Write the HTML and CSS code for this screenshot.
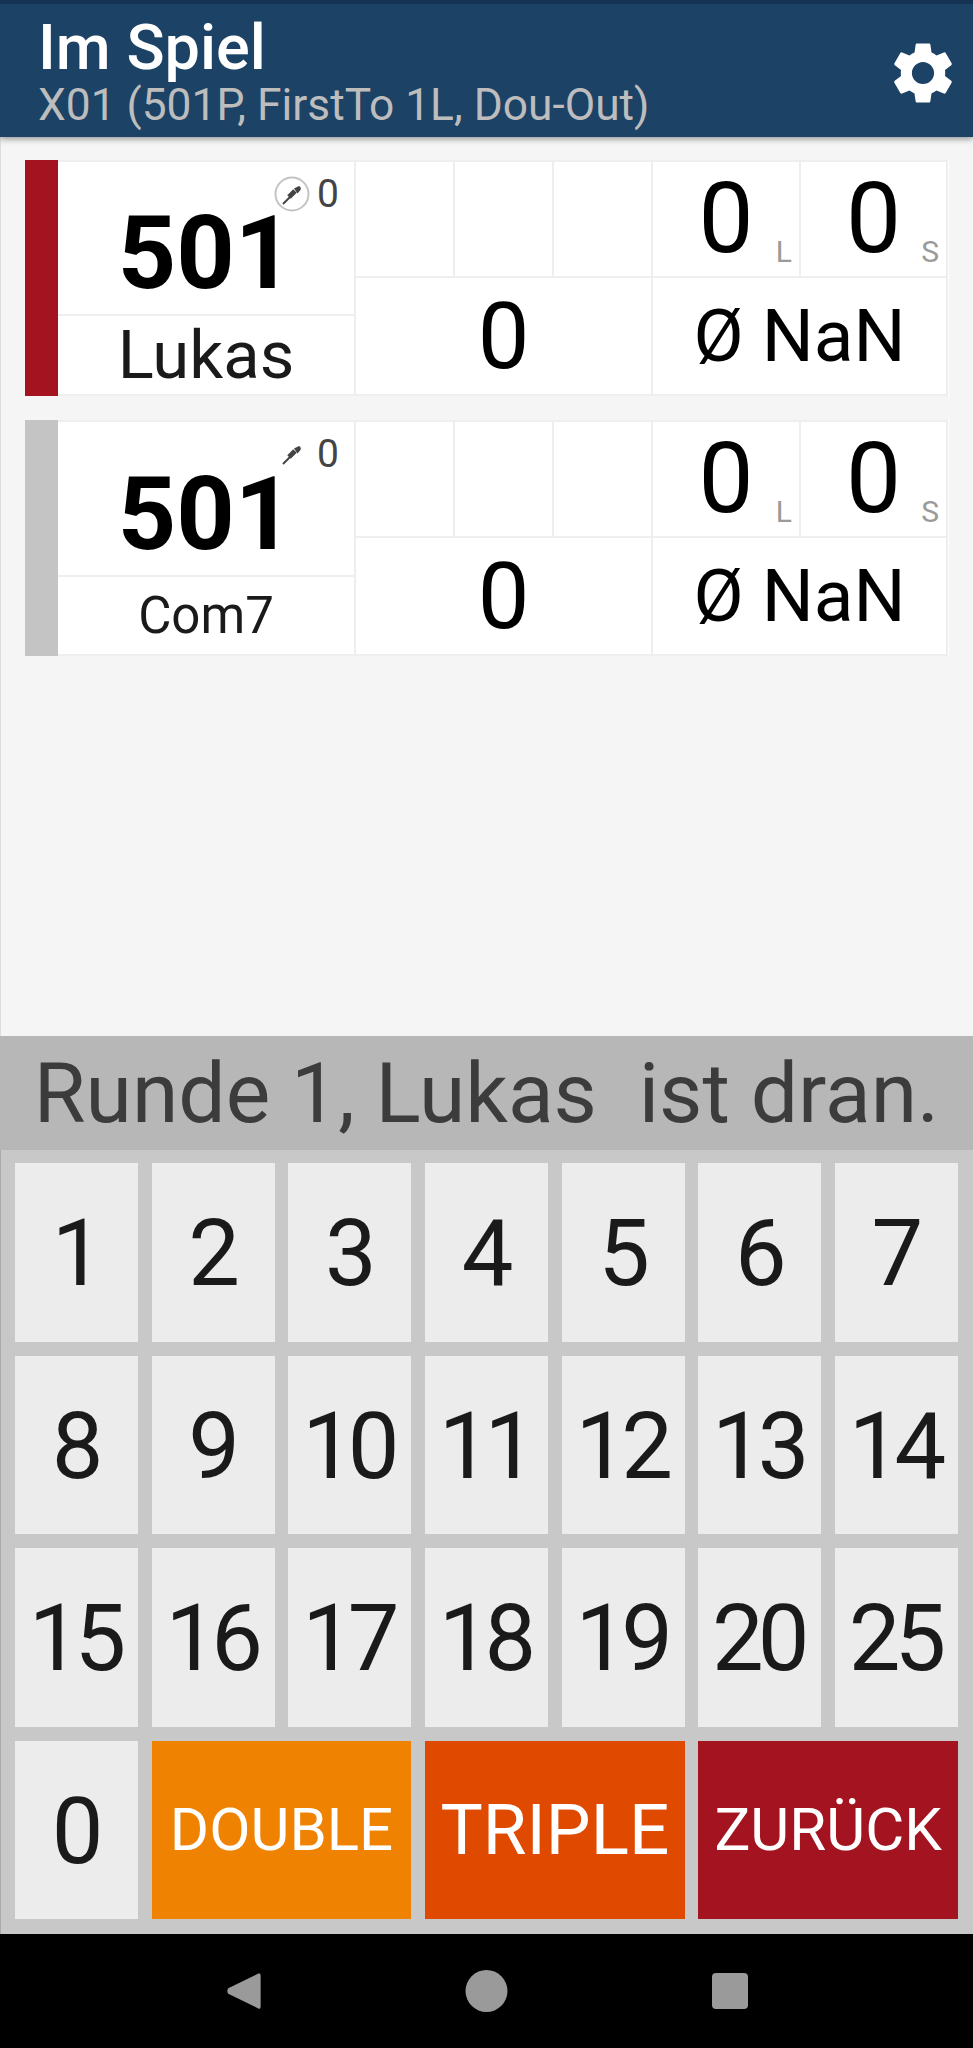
FILE: index.html
```html
<!DOCTYPE html>
<html lang="de">
<head>
  <meta charset="UTF-8">
  <meta name="viewport" content="width=device-width, initial-scale=1.0">
  <title>Im Spiel</title>
  <link rel="stylesheet" href="styles.css">
</head>
<body>
  <header class="app-bar">
    <div class="app-titles">
      <div class="app-title">Im Spiel</div>
      <div class="app-subtitle">X01 (501P, FirstTo 1L, Dou-Out)</div>
    </div>
    <svg class="gear" viewBox="0 0 24 24" aria-label="Einstellungen">
      <path d="M19.14 12.94c.04-.3.06-.61.06-.94 0-.32-.02-.64-.07-.94l2.03-1.58c.18-.14.23-.41.12-.61l-1.92-3.32c-.12-.22-.37-.29-.59-.22l-2.39.96c-.5-.38-1.03-.7-1.62-.94l-.36-2.54c-.04-.24-.24-.41-.48-.41h-3.84c-.24 0-.43.17-.47.41l-.36 2.54c-.59.24-1.13.57-1.62.94l-2.39-.96c-.22-.08-.47 0-.59.22L2.74 8.87c-.12.21-.08.47.12.61l2.03 1.58c-.05.3-.09.63-.09.94s.02.64.07.94l-2.03 1.58c-.18.14-.23.41-.12.61l1.92 3.32c.12.22.37.29.59.22l2.39-.96c.5.38 1.03.7 1.62.94l.36 2.54c.05.24.24.41.48.41h3.84c.24 0 .44-.17.47-.41l.36-2.54c.59-.24 1.13-.56 1.62-.94l2.39.96c.22.08.47 0 .59-.22l1.92-3.32c.12-.22.07-.47-.12-.61l-2.01-1.58zM12 15.6c-1.98 0-3.6-1.62-3.6-3.6s1.62-3.6 3.6-3.6 3.6 1.62 3.6 3.6-1.62 3.6-3.6 3.6z"/>
    </svg>
  </header>

  <main class="players">
    <section class="player">
      <div class="player-bar active"></div>
      <div class="player-main">
        <div class="score-cell">
          <span class="score">501</span>
          <div class="darts">
            <svg class="dart-icon" viewBox="0 0 36 36">
              <circle class="dart-ring" cx="18" cy="18" r="16.5"/>
              <path class="dart-tip" d="M9 28 L17 20"/>
              <path class="dart-barrel" d="M15 21 L21 15"/>
              <path class="dart-flight" d="M20 12.5 L25 10 Q27.5 11 26.5 14 L23.5 17.5 Z"/>
            </svg>
            <span>0</span>
          </div>
        </div>
        <div class="name-cell name-large">Lukas</div>
      </div>
      <div class="stats">
        <div class="stat"></div>
        <div class="stat"></div>
        <div class="stat"></div>
        <div class="stat stat-wide">
          <span class="stat-value">0</span><span class="stat-unit">L</span>
        </div>
        <div class="stat stat-wide">
          <span class="stat-value">0</span><span class="stat-unit">S</span>
        </div>
        <div class="stat stat-points"><span class="stat-total">0</span></div>
        <div class="stat stat-avg">Ø NaN</div>
      </div>
    </section>

    <section class="player">
      <div class="player-bar"></div>
      <div class="player-main">
        <div class="score-cell">
          <span class="score">501</span>
          <div class="darts">
            <svg class="dart-icon" viewBox="0 0 36 36">
              <path class="dart-tip" d="M9 28 L17 20"/>
              <path class="dart-barrel" d="M15 21 L21 15"/>
              <path class="dart-flight" d="M20 12.5 L25 10 Q27.5 11 26.5 14 L23.5 17.5 Z"/>
            </svg>
            <span>0</span>
          </div>
        </div>
        <div class="name-cell name-small">Com7</div>
      </div>
      <div class="stats">
        <div class="stat"></div>
        <div class="stat"></div>
        <div class="stat"></div>
        <div class="stat stat-wide">
          <span class="stat-value">0</span><span class="stat-unit">L</span>
        </div>
        <div class="stat stat-wide">
          <span class="stat-value">0</span><span class="stat-unit">S</span>
        </div>
        <div class="stat stat-points"><span class="stat-total">0</span></div>
        <div class="stat stat-avg">Ø NaN</div>
      </div>
    </section>
  </main>

  <div class="turn">Runde 1, Lukas&nbsp; ist dran.</div>

  <div class="keypad">
    <button class="key">1</button>
    <button class="key">2</button>
    <button class="key">3</button>
    <button class="key">4</button>
    <button class="key">5</button>
    <button class="key">6</button>
    <button class="key">7</button>
    <button class="key">8</button>
    <button class="key">9</button>
    <button class="key">10</button>
    <button class="key">11</button>
    <button class="key">12</button>
    <button class="key">13</button>
    <button class="key">14</button>
    <button class="key">15</button>
    <button class="key">16</button>
    <button class="key">17</button>
    <button class="key">18</button>
    <button class="key">19</button>
    <button class="key">20</button>
    <button class="key">25</button>
    <button class="key">0</button>
    <button class="key key-action key-double">DOUBLE</button>
    <button class="key key-action key-triple">TRIPLE</button>
    <button class="key key-action key-back">ZURÜCK</button>
  </div>

  <nav class="nav-bar">
    <svg class="nav-icon nav-back" viewBox="0 0 36 42">
      <path d="M33 3 Q36 1 36 5 V37 Q36 41 33 39 L2 24 Q0 21 2 18 Z"/>
    </svg>
    <svg class="nav-icon nav-home" viewBox="0 0 42 42">
      <circle cx="21" cy="21" r="21"/>
    </svg>
    <svg class="nav-icon nav-recent" viewBox="0 0 36 36">
      <rect width="36" height="36" rx="4"/>
    </svg>
  </nav>
</body>
</html>
```

FILE: styles.css
```css
* {
  box-sizing: border-box;
}
body {
  margin: 0;
  height: 2048px;
  display: flex;
  flex-direction: column;
  font-family: Roboto, "Liberation Sans", sans-serif;
  background-color: #f5f5f5;
  color: #000;
}

/* top bar */
.app-bar {
  height: 137px;
  flex: none;
  display: flex;
  align-items: center;
  justify-content: space-between;
  padding: 4px 13px 0 38px;
  background-color: #1c4266;
  border-top: 4px solid #163354;
  box-shadow: 0 2px 6px rgba(0, 0, 0, 0.4);
  position: relative;
}
.app-title {
  font-size: 63px;
  font-weight: 500;
  line-height: 64px;
  color: #fff;
}
.app-subtitle {
  font-size: 44.3px;
  line-height: 50px;
  color: #bdbdbd;
}
.gear {
  width: 74px;
  height: 74px;
  fill: #fff;
}

/* player cards */
.players {
  flex: 1;
  padding: 23px 24px 0 24px;
  display: flex;
  flex-direction: column;
  gap: 24px;
  border-left: 1px solid #ddd;
}
.player {
  height: 236px;
  display: flex;
  background-color: #fff;
}
.player-bar {
  width: 33px;
  background-color: #c4c4c4;
}
.player-bar.active {
  background-color: #a31420;
}
.player-main {
  width: 298px;
  display: flex;
  flex-direction: column;
}
.score-cell {
  height: 157px;
  position: relative;
  display: flex;
  align-items: flex-end;
  justify-content: center;
  padding: 0 1px 9px 0;
  border: 2px solid #eee;
  border-left: none;
}
.score {
  font-size: 102px;
  font-weight: 700;
  line-height: 104px;
}
.darts {
  position: absolute;
  top: 13px;
  right: 15px;
  display: flex;
  align-items: center;
  gap: 7px;
  font-size: 39px;
  line-height: 38px;
  color: #444;
}
.dart-icon {
  width: 36px;
  height: 36px;
}
.dart-ring {
  fill: none;
  stroke: #c4c4c4;
  stroke-width: 2;
}
.dart-tip {
  stroke: #444;
  stroke-width: 2;
}
.dart-barrel {
  stroke: #444;
  stroke-width: 5;
}
.dart-flight {
  fill: #444;
}
.name-cell {
  flex: 1;
  display: flex;
  align-items: center;
  justify-content: center;
  color: #1a1a1a;
  border: 2px solid #eee;
  border-top: none;
  border-left: none;
}
.name-large {
  font-size: 67px;
}
.name-small {
  font-size: 51px;
}
.stats {
  flex: 1;
  display: grid;
  grid-template-columns: 99px 99px 99px 148px 147px;
  grid-template-rows: 116px 120px;
}
.stat {
  position: relative;
  display: flex;
  align-items: center;
  justify-content: center;
  border-top: 2px solid #eee;
  border-right: 2px solid #eee;
}
.stat-value {
  font-size: 98px;
  line-height: 100px;
}
.stat-unit {
  position: absolute;
  right: 7px;
  bottom: 8px;
  font-size: 30px;
  line-height: 32px;
  color: #9a9a9a;
}
.stat-points {
  grid-column: span 3;
  border-bottom: 2px solid #eee;
}
.stat-total {
  font-size: 92px;
  line-height: 92px;
  margin-top: 2px;
}
.stat-avg {
  grid-column: span 2;
  font-size: 73px;
  border-bottom: 2px solid #eee;
}

/* turn banner */
.turn {
  height: 114px;
  flex: none;
  display: flex;
  align-items: center;
  justify-content: center;
  font-size: 84px;
  white-space: pre;
  color: #3c3c3c;
  background-color: #b7b7b7;
}

/* score keys */
.keypad {
  flex: none;
  height: 784px;
  display: grid;
  grid-template-columns: repeat(7, 1fr);
  grid-auto-rows: 1fr;
  gap: 14px 13.6px;
  padding: 13px 15px 15px 14px;
  background-color: #c8c8c8;
  border-left: 1px solid #aaa;
}
.key {
  border: none;
  padding: 3px 4px 0 0;
  font-family: inherit;
  font-size: 92px;
  letter-spacing: -6px;
  color: #1a1a1a;
  background-color: #ececec;
}
.key-action {
  grid-column: span 2;
  padding: 0;
  letter-spacing: 0;
  color: #fff;
  font-size: 60px;
}
.key-double {
  background-color: #ef8200;
}
.key-triple {
  font-size: 71px;
  background-color: #e04a00;
}
.key-back {
  font-size: 60px;
  background-color: #a31420;
}

/* android nav */
.nav-bar {
  height: 114px;
  flex: none;
  display: flex;
  align-items: center;
  justify-content: center;
  gap: 204px;
  background-color: #000;
}
.nav-icon {
  fill: #9a9a9a;
}
.nav-back {
  width: 35px;
  height: 40px;
}
.nav-home {
  width: 43px;
  height: 42px;
}
.nav-recent {
  width: 36px;
  height: 36px;
}
```
